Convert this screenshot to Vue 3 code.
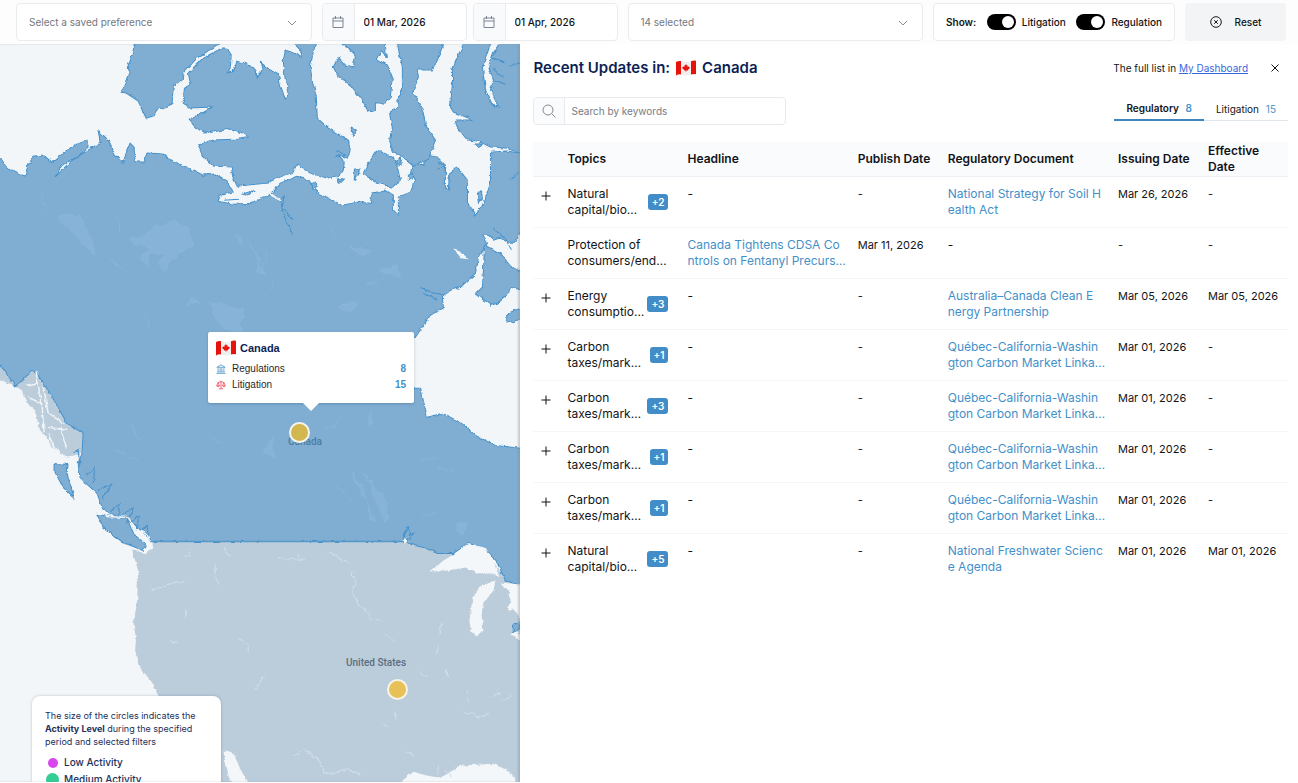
<script setup>
import { ref } from 'vue'

const showLitigation = ref(true)
const showRegulation = ref(true)
const keyword = ref('')

const carbon = {
  more: '+1',
  topic: ['Carbon', 'taxes/mark…'],
  doc: ['Québec-California-Washin', 'gton Carbon Market Linka…'],
  issuing: 'Mar 01, 2026',
}

const rows = [
  { more: '+2', topic: ['Natural', 'capital/bio…'], doc: ['National Strategy for Soil H', 'ealth Act'], issuing: 'Mar 26, 2026' },
  { topic: ['Protection of', 'consumers/end…'], headline: ['Canada Tightens CDSA Co', 'ntrols on Fentanyl Precurs…'], publish: 'Mar 11, 2026' },
  { more: '+3', topic: ['Energy', 'consumptio…'], doc: ['Australia–Canada Clean E', 'nergy Partnership'], issuing: 'Mar 05, 2026', effective: 'Mar 05, 2026' },
  { ...carbon },
  { ...carbon, more: '+3' },
  { ...carbon },
  { ...carbon },
  { more: '+5', topic: ['Natural', 'capital/bio…'], doc: ['National Freshwater Scienc', 'e Agenda'], issuing: 'Mar 01, 2026', effective: 'Mar 01, 2026' },
]
</script>

<template>
  <div class="page">
    <svg class="defs" aria-hidden="true">
      <symbol id="flag" viewBox="0 0 20 16">
        <path d="M0 2Q2.500 .6 5 1V14.400Q2.500 14 0 15.500Z" fill="#e8120c" />
        <path d="M5 1Q10 3 15 1.200V14.600Q10 16.400 5 14.400Z" fill="#f1eeee" />
        <path d="M15 1.200Q17.500 .2 20 .8V14.200Q17.500 13.600 15 14.600Z" fill="#e8120c" />
        <path d="M10 4l.9 1.500.8-.4-.3 2 1.100-.8.300.7 1-.1-.5 1.400.3.300-2 1.500.1.700-1.500-.2V12h-.4v-1.400l-1.500.2.100-.7-2-1.500.3-.3-.5-1.400 1 .1.300-.7 1.100.8-.3-2 .8.4z" fill="#e8120c" />
      </symbol>
      <symbol id="calendar" viewBox="0 0 14 14">
        <path d="M2 3h10v9.500H2zM2 6h10M4.500 1v3M9.500 1v3" fill="none" stroke="#7c8594" />
      </symbol>
      <symbol id="chevron" viewBox="0 0 10 6">
        <path d="M1 1l4 4 4-4" fill="none" stroke="#8b9097" />
      </symbol>
    </svg>

    <header class="toolbar">
      <div class="box picker">
        <select aria-label="Saved preference"><option>Select a saved preference</option></select>
        <svg class="chevron"><use href="#chevron" /></svg>
      </div>
      <div class="dates">
        <label class="box date">
          <span class="date-icon"><svg><use href="#calendar" /></svg></span>
          <input type="text" value="01 Mar, 2026" aria-label="From date" />
        </label>
        <label class="box date">
          <span class="date-icon"><svg><use href="#calendar" /></svg></span>
          <input type="text" value="01 Apr, 2026" aria-label="To date" />
        </label>
      </div>
      <div class="box picker">
        <select aria-label="Filters"><option>14 selected</option></select>
        <svg class="chevron"><use href="#chevron" /></svg>
      </div>
      <div class="box show">
        <span class="show-title">Show:</span>
        <label><input v-model="showLitigation" type="checkbox" class="switch" />Litigation</label>
        <label><input v-model="showRegulation" type="checkbox" class="switch" />Regulation</label>
      </div>
      <button class="reset" type="button">
        <svg viewBox="0 0 12 12"><circle cx="6" cy="6" r="5.300" /><path d="M4.200 4.200l3.600 3.600M7.800 4.200l-3.600 3.600" /></svg>
        Reset
      </button>
    </header>

    <main class="content">
      <section class="map" aria-label="Map">
        <svg class="land" viewBox="0 44 520 739" preserveAspectRatio="xMinYMin slice">
          <defs>
            <filter id="rough" x="0" y="0" width="100%" height="100%">
              <feTurbulence type="fractalNoise" baseFrequency=".17" numOctaves="3" seed="4" />
              <feDisplacementMap in="SourceGraphic" scale="4" xChannelSelector="R" yChannelSelector="G" />
            </filter>
            <filter id="lightrough" x="0" y="0" width="100%" height="100%">
              <feTurbulence type="fractalNoise" baseFrequency=".1" numOctaves="2" seed="9" />
              <feDisplacementMap in="SourceGraphic" scale="9" xChannelSelector="R" yChannelSelector="G" />
            </filter>
          </defs>
          <rect x="-10" y="30" width="540" height="770" fill="#f3f6f8" />
          <g filter="url(#rough)">
            <path class="us" d="M150 541L404 541 423 547 437 553 455 553 484 547 505 580 530 586V800H240L215 783 190 740 158 695 152 682 140 667 135 650 136 637 133 622 137 603 138 570 132 550 147 553Z" />
            <path class="us" d="M-10 358L0 366 5 370 15 386 33 370 50 393 67 423 83 433 82 453 74 456 66 457 58 449 53 448 49 440 43 433 40 430 35 410 29 405 24 397 22 390 12 384 0 380-10 376Z" />
          </g>
          <g class="ca" filter="url(#rough)">
            <path d="M-10 150L0 157 7 168 25 176 28 165 33 157 43 155 52 162 63 153 75 145 87 140 88 147 77 157 62 165 55 177 67 165 80 155 93 147 100 142 98 130 108 140 115 155 123 163 127 150 130 143 134 147 135 162 143 162 147 153 163 154 173 162 187 167 203 175 215 174 227 182 232 192 220 195 218 201 233 204 250 203 263 198 267 197 280 183 297 176 310 182 317 193 327 198 342 205 357 202 370 203 372 193 385 190 393 195 393 210 398 215 398 197 410 192 415 180 410 172 413 163 423 165 427 155 437 157 445 165 445 187 448 190 449 173 457 167 467 180 467 203 475 215 481 207 485 198 490 183 490 152 505 151 530 154V228L520 232 514 242 507 242 500 238 493 240 488 235 482 235 487 243 478 258 475 273 460 287 450 290 442 297 443 307 430 315 415 337 402 360 413 388 420 388 427 417 442 413 460 422 475 435 495 445 530 449V586L520 585 505 580 497 563 483 547 467 543 453 553 437 553 423 547 407 543 403 532V541H152L143 532 133 523 122 518 110 513 102 507 97 493 87 484 80 477 78 463 82 453 83 433 67 423 50 393 40 378 33 370 15 386 5 370-10 358Z" />
            <path d="M137 30L135 44 130 60 128 65 129 72 125 83 121 92 126 93 138 101 142 110 146 118 153 116 158 108 165 109 172 103 173 87 182 80 183 73 197 58 220 43 228 30Z" />
            <path d="M222 48L227 48 231 55 230 68 227 73 233 72 237 61 250 65 256 72 257 78 263 68 260 62 270 70 278 73 280 85 285 99 289 93 285 80 283 60 285 50 293 53 302 58 300 50 294 44 292 30H320L315 44 310 66 312 80 316 97 317 118 328 128 348 140 350 150 347 158 337 154 344 161 343 170 340 175 327 178 310 173 300 167 297 163 293 172 277 178 267 183 237 186 233 178 231 167 213 166 202 155 198 145 213 140 240 139 248 137 243 133 230 129 207 133 197 129 189 120 202 113 213 107 190 108 183 103 184 90 190 82 188 73 203 58Z" />
            <path d="M342 30V44L350 50 355 55 353 67 345 65 338 57 333 67 337 75 350 85 362 100 368 112 375 110 375 103 385 103 390 97 392 77 387 65 376 59 381 50 386 58 384 30Z" />
            <path d="M396 30L397 44 402 67 402 90 398 98 397 107 389 113 392 128 389 140 393 152 403 158 413 166 428 158 432 150 435 140 425 125 423 113 417 100 412 93 418 77 417 70 432 70 437 60 443 44V30Z" />
            <path d="M377 150L393 157 397 167 400 180 392 187 377 183 363 173 367 165Z" />
            <path d="M468 30L463 44 457 57 452 70 452 83 450 107 453 112 473 120 455 120 457 128 467 140 478 141 490 147 505 148 520 153H530V30H507L493 53 488 67 493 80 490 90 498 107 492 105 485 90 482 67 490 44 494 30Z" />
            <path d="M484 245L500 253 510 266 530 277V292L510 287 507 295 497 303 490 305 475 294 482 287 483 270ZM507 323L505 318 510 312 520 308 530 310V320L517 320ZM55 463L68 464 67 473 74 497 63 487 55 472ZM97 514L127 518 133 533 147 545 143 550 123 542 103 527Z" />
            <path d="M351 127l5 3-2 6-3-4zM354 170l5-1-1 6-4 4zM310 184l5-2 2 4-4 3zM396 160l4-2 1 6-4 1zM408 174l5-2 0 6-5 2zM477 193l4-2 1 8-3 3zM475 144l7 0-3 4zM242 194l12-4-7 6zM224 200l14-1M337 178l6 1-4 4zM512 625l8-5v8l-7 4z" />
            <path d="M72 453l6-4 2 17M87 475l8-8-2 16M98 490l13-6-9 14M111 511l9-8-2 13M120 516l13-8-7 15M130 521l9-5-3 14M140 531l7-5 2 14M274 195l7 8 2 11 9 22M278 201l6-4-2 9 10 14M403 535l5-9 1 8 5-2-8 9M510 66l9-3M492 58l12 5M493 69l10 9M494 80l11 4M510 180l8-8M336 150l9 5-10 2M438 162l7 5-8 2M493 228l12 10 6 13M420 287l15 6 10 2M423 293l14 7" class="twig" />
          </g>
          <g filter="url(#rough)" class="lake">
            <path d="M430 571L443 560 463 548 473 544 484 547 493 560 499 577 490 572 477 573 465 567 447 570ZM495 580L482 585 472 597 469 620 471 632 477 636 483 630 481 613 483 602 493 590ZM500 582L530 585V622L520 618 513 608 507 610 510 600 507 590ZM511 634l5-4 4 5-2 4zM397 790L402 780 413 771 427 775 440 777 460 765 493 763 510 772 520 790ZM223 750L232 750 240 768 252 790H244L229 778ZM452 248l7 2 9 9-8-1zM146 541l6-1 1 8-6 4zM402 539l4-2 1 5-4 1z" />
            <path d="M26 386l13-3M36 371l5 32M43 385l5 27 16 12M27 396l15 8 2 28M48 427l19 3M48 432l8 20M60 427l6 20M96 507l11 9 20 1M128 517l8 12 11 5 3 8M280 200l-12-8M269 194l9 5" class="channel" />
          </g>
          <g filter="url(#lightrough)" class="waters">
            <path d="M130 239L151 232 155 227 173 221 190 229 195 246 178 251 172 261 163 270 158 264 166 253 150 255 146 266 140 259 150 247 133 244ZM207 301l10 20 16 11 10 2-3-14 6-10M234 234l8 4-2 8M248 243l13 17-7 11 14 7M266 250l-3 31M332 226l5 10M347 246l16 3 9 2-10 7M380 270l15-4 6 13M385 275l-18 11M338 308l10-6 10 2-5 10M342 414l-8 10-9 6M370 410l3 11-8 5M350 470l14 20 4 28 7 3M364 473l20 26 4 18-4 4M336 484l19 22M116 217l4 13-1 4M41 193l5 20M57 217l21-4 12 26 3 16M130 423l12 20M117 449l19 11M212 438l10 6M274 437l-10 12 9 8M420 460l18-3M437 468l17 3M422 514l15-2M455 524l11-2-3 12-8-4M190 296l8 7-9 1M146 314l3 14M270 281l4 10M111 259l16 12" />
          </g>
          <g filter="url(#lightrough)" class="usrivers">
            <path d="M278 557l24 3-4-6M328 554l9 1 5 6 8 1M353 571l1 18-2 9 13 10 4 10 11 2M150 588l23-4 12-4M190 547l1 10-8-1M226 546l3 11M238 638l10 5 0 9M386 634l8 5M443 622l-5 11M437 645l-2 8M419 671l6 5M445 671l5 6M467 690l0 12M464 710l14 8 9-6M492 697l6-6M503 700l8-5M381 725l8 2M396 711l-2 6M254 689l6-6 2-8M294 754l12-5 12 10 7 14 10-1 11-5 14 9M405 750l8 6M435 764l4 10M446 768l4 8M216 566v16M173 640l3 5M185 615l2-5" />
          </g>
          <path d="M150 541H403" stroke="#5698c7" stroke-width="1.500" />
        </svg>
        <span class="country canada">Canada</span>
        <span class="country usa">United States</span>
        <button class="pin pin-ca" type="button" aria-label="Canada activity"></button>
        <button class="pin pin-us" type="button" aria-label="United States activity"></button>
        <div class="popup">
          <h2><svg class="flag"><use href="#flag" /></svg>Canada</h2>
          <p>
            <svg class="mini" viewBox="0 0 12 12" stroke="#4f96c9" fill="none"><path d="M1 4l5-3 5 3zM2.500 5v4M5 5v4M7 5v4M9.500 5v4M1.500 9.500h9M.5 11.200h11" /></svg>
            Regulations<b>8</b>
          </p>
          <p>
            <svg class="mini" viewBox="0 0 12 12" stroke="#ee5262" fill="none"><path d="M6 1v9.500M3.500 10.500h5M2.500 3L6 2l3.500 1M2.500 3L.8 7h3.400zM9.500 3L7.800 7h3.400zM.8 7q1.700 2.500 3.400 0M7.800 7q1.700 2.500 3.400 0" /></svg>
            Litigation<b>15</b>
          </p>
        </div>
        <aside class="legend">
          <p>The size of the circles indicates the <b>Activity Level</b> during the specified period and selected filters</p>
          <ul>
            <li><i class="low"></i>Low Activity</li>
            <li><i class="medium"></i>Medium Activity</li>
          </ul>
        </aside>
      </section>

      <section class="panel">
        <div class="headline">
          <h1>Recent Updates in: <svg class="flag"><use href="#flag" /></svg> Canada</h1>
          <p class="full">The full list in <a href="#dashboard">My Dashboard</a></p>
          <button class="close" type="button" aria-label="Close"><svg viewBox="0 0 10 10"><path d="M1.500 1.500l7 7M8.500 1.500l-7 7" /></svg></button>
        </div>
        <div class="filters">
          <label class="search">
            <span><svg viewBox="0 0 14 14"><circle cx="6" cy="6" r="5" /><path d="M9.600 9.600L13.500 13.500" /></svg></span>
            <input v-model="keyword" type="text" placeholder="Search by keywords" aria-label="Search by keywords" />
          </label>
          <nav class="tabs">
            <button type="button" class="active">Regulatory <span>8</span></button>
            <button type="button">Litigation <span>15</span></button>
          </nav>
        </div>
        <table>
          <colgroup>
            <col class="c-plus" /><col class="c-topic" /><col /><col class="c-date" /><col /><col class="c-date" /><col class="c-last" />
          </colgroup>
          <thead>
            <tr>
              <th></th><th>Topics</th><th>Headline</th><th>Publish Date</th><th>Regulatory Document</th><th>Issuing Date</th><th>Effective Date</th>
            </tr>
          </thead>
          <tbody>
            <tr v-for="(row, i) in rows" :key="i">
              <td class="plus">
                <button v-if="row.more" type="button" aria-label="Expand row"><svg viewBox="0 0 10 10"><path d="M5 .5v9M.5 5h9" /></svg></button>
              </td>
              <td>
                <div class="topic">
                  <span>{{ row.topic[0] }}<br />{{ row.topic[1] }}</span>
                  <b v-if="row.more">{{ row.more }}</b>
                </div>
              </td>
              <td><a v-if="row.headline" href="#headline">{{ row.headline[0] }}<br />{{ row.headline[1] }}</a><template v-else>-</template></td>
              <td class="when">{{ row.publish || '-' }}</td>
              <td><a v-if="row.doc" href="#document">{{ row.doc[0] }}<br />{{ row.doc[1] }}</a><template v-else>-</template></td>
              <td class="when">{{ row.issuing || '-' }}</td>
              <td class="when">{{ row.effective || '-' }}</td>
            </tr>
          </tbody>
        </table>
      </section>
    </main>
  </div>
</template>

<style>
body { margin: 0; background: #fff; }
</style>

<style scoped>
* { box-sizing: border-box; }
.page { display: flex; flex-direction: column; height: 100vh; padding-bottom: 1px; overflow: hidden; font-family: Inter, "Noto Sans", sans-serif; font-size: 12px; color: #111418; }
.defs { position: absolute; width: 0; height: 0; }
button, input, select { font: inherit; color: inherit; border: 0; background: none; padding: 0; margin: 0; outline: 0; }
h1, h2, p, ul { margin: 0; padding: 0; }
svg { display: block; flex: none; }

.toolbar { display: flex; flex: none; gap: 10px; height: 44px; padding: 3px 12px 3px 16px; background: #fdfdfe; font-size: 10px; }
.box { height: 38px; border: 1px solid #e9ebee; border-radius: 4px; background: #fff; }
.picker { position: relative; flex: 1; }
.picker select { width: 100%; height: 100%; padding: 0 12px; appearance: none; color: #74787e; }
.chevron { position: absolute; right: 14px; top: 16px; width: 10px; height: 6px; pointer-events: none; }
.dates { display: flex; gap: 6px; }
.date { display: flex; width: 145px; overflow: hidden; }
.date-icon { display: flex; align-items: center; justify-content: center; width: 32px; background: #f8fafc; border-right: 1px solid #e9ebee; }
.date-icon svg { width: 14px; height: 14px; }
.date input { flex: 1; min-width: 0; padding-left: 9px; font-weight: 500; }
.show { display: flex; align-items: center; justify-content: space-between; width: 242px; padding: 0 12px; font-weight: 500; }
.show-title { font-weight: 600; }
.show label { display: flex; align-items: center; gap: 6px; }
.switch { appearance: none; width: 29px; height: 16px; border-radius: 8px; background: #b9bdc3; }
.switch::after { content: ''; display: block; width: 12px; height: 12px; margin: 2px; border-radius: 50%; background: #fff; }
.switch:checked { background: #000; }
.switch:checked::after { margin-left: 15px; }
.reset { display: flex; align-items: center; justify-content: center; gap: 13px; width: 101px; height: 38px; border-radius: 4px; background: #f2f4f6; font-weight: 500; }
.reset svg { width: 12px; height: 12px; fill: none; stroke: #15181c; }

.content { display: flex; flex: 1; min-height: 0; }
.map { position: relative; flex: none; width: 40.1%; overflow: hidden; background: #f3f6f8; }
.map::after { content: ''; position: absolute; inset: 0; box-shadow: inset -2px 0 2px #7f8d9a66; pointer-events: none; }
.land { width: 100%; height: 100%; }
.ca path { fill: #80aed2; stroke: #4490ca; stroke-width: 1; }
.ca .twig, .channel { fill: none; }
.us { fill: #bbccdb; }
.lake path { fill: #f4f7f9; }
.lake .channel { fill: none; stroke: #f0f4f7; stroke-width: 1.500; }
.waters path { fill: #8bb8da; fill-opacity: .55; stroke: #90bbdc; stroke-opacity: .5; }
.usrivers path { fill: none; stroke: #d2dfe9; }
.country { position: absolute; font: 500 10px/14px Roboto, sans-serif; }
.canada { left: 288px; top: 391px; color: #4b7ba3; }
.usa { left: 346px; top: 612px; color: #5d6e7e; }
.pin { position: absolute; width: 21px; height: 21px; border: 2px solid #f6f4ea; border-radius: 50%; }
.pin-ca { left: 289px; top: 378px; background: #d2b64f; }
.pin-us { left: 387px; top: 635px; background: #e8c156; }
.popup { position: absolute; left: 208px; top: 288px; width: 206px; padding: 8px 8px 10px; border-radius: 2px; background: #fff; box-shadow: 0 1px 3px #1e3c5a44; font: 10px/16px "Liberation Sans", sans-serif; color: #26292d; }
.popup::after { content: ''; position: absolute; left: 95px; top: 100%; border: 8px solid transparent; border-top-color: #fff; border-bottom: 0; }
.popup h2 { display: flex; align-items: center; gap: 4px; margin-bottom: 5px; font-size: 11px; line-height: 16px; color: #0d1f55; }
.popup p { display: flex; align-items: center; gap: 6px; }
.popup b { margin-left: auto; color: #4791c8; }
.mini { width: 10px; height: 10px; }
.flag { width: 20px; height: 16px; }
.legend { position: absolute; left: 32px; top: 652px; width: 189px; padding: 13px; border-radius: 8px; background: #fff; box-shadow: 0 0 3px #1e3c5a44; font-size: 9px; line-height: 13px; color: #23305a; }
.legend ul { margin-top: 6px; list-style: none; font-size: 10px; line-height: 17px; font-weight: 500; }
.legend li { display: flex; align-items: center; gap: 4px; }
.legend i { display: flex; justify-content: center; width: 15px; }
.legend i::before { content: ''; width: 10px; height: 10px; border-radius: 50%; background: #d946ef; }
.legend .medium::before { width: 13px; height: 13px; background: #34cd94; }

.panel { flex: 1; min-width: 0; padding: 11px 10px 0 13px; }
.headline { display: flex; align-items: center; height: 26px; }
h1 { display: flex; align-items: center; gap: 6px; font-size: 15px; line-height: 20px; font-weight: 600; color: #0d1f55; }
.full { margin-left: auto; font-size: 10px; }
.full a { color: #3568dd; }
.close { width: 10px; height: 10px; margin: 0 8px 0 22px; }
.close svg { width: 10px; height: 10px; fill: none; stroke: #111; }
.filters { display: flex; align-items: flex-start; justify-content: space-between; height: 61px; padding-top: 16px; }
.search { display: flex; width: 253px; height: 28px; border: 1px solid #e8eaed; border-radius: 4px; overflow: hidden; }
.search span { display: flex; align-items: center; justify-content: center; width: 31px; border-right: 1px solid #e8eaed; background: #fafbfc; }
.search svg { width: 14px; height: 14px; fill: none; stroke: #858b92; }
.search input { flex: 1; min-width: 0; padding-left: 6px; font-size: 10px; }
.search input::placeholder { color: #777c83; opacity: 1; }
.tabs { display: flex; font-size: 10px; }
.tabs button { height: 24px; padding: 0 12px; border-bottom: 1px solid #e0e6ec; }
.tabs .active { border-bottom: 2px solid #3d87c0; font-weight: 600; }
.tabs span { margin-left: 4px; color: #4791c8; }

table { width: 100%; table-layout: fixed; border-collapse: separate; border-spacing: 0; line-height: 16px; }
.c-plus { width: 26px; }
.c-topic { width: 120px; }
.c-date { width: 90px; }
.c-last { width: 88px; }
th { height: 35px; padding: 1px 0 1px 8px; text-align: left; font-weight: 600; font-size: 12px; background: #fafbfd; border-bottom: 1px solid #eceff3; }
th:last-child { padding-right: 16px; }
td { height: 51px; padding: 9px 0 9px 8px; vertical-align: top; white-space: nowrap; border-bottom: 1px solid #f5f6f7; font-size: 12px; }
.when { font-size: 11px; }
tbody tr:last-child td { border-bottom-color: transparent; }
td a { color: #4390c9; text-decoration: none; }
.plus button { width: 10px; height: 10px; margin-top: 5px; }
.plus svg { width: 10px; height: 10px; fill: none; stroke: #111; }
.topic { display: flex; align-items: center; justify-content: space-between; padding-right: 11px; }
.topic b { padding: 0 4px; border-radius: 3px; background: #428dc8; color: #fff; font-size: 10px; font-weight: 600; }
</style>
